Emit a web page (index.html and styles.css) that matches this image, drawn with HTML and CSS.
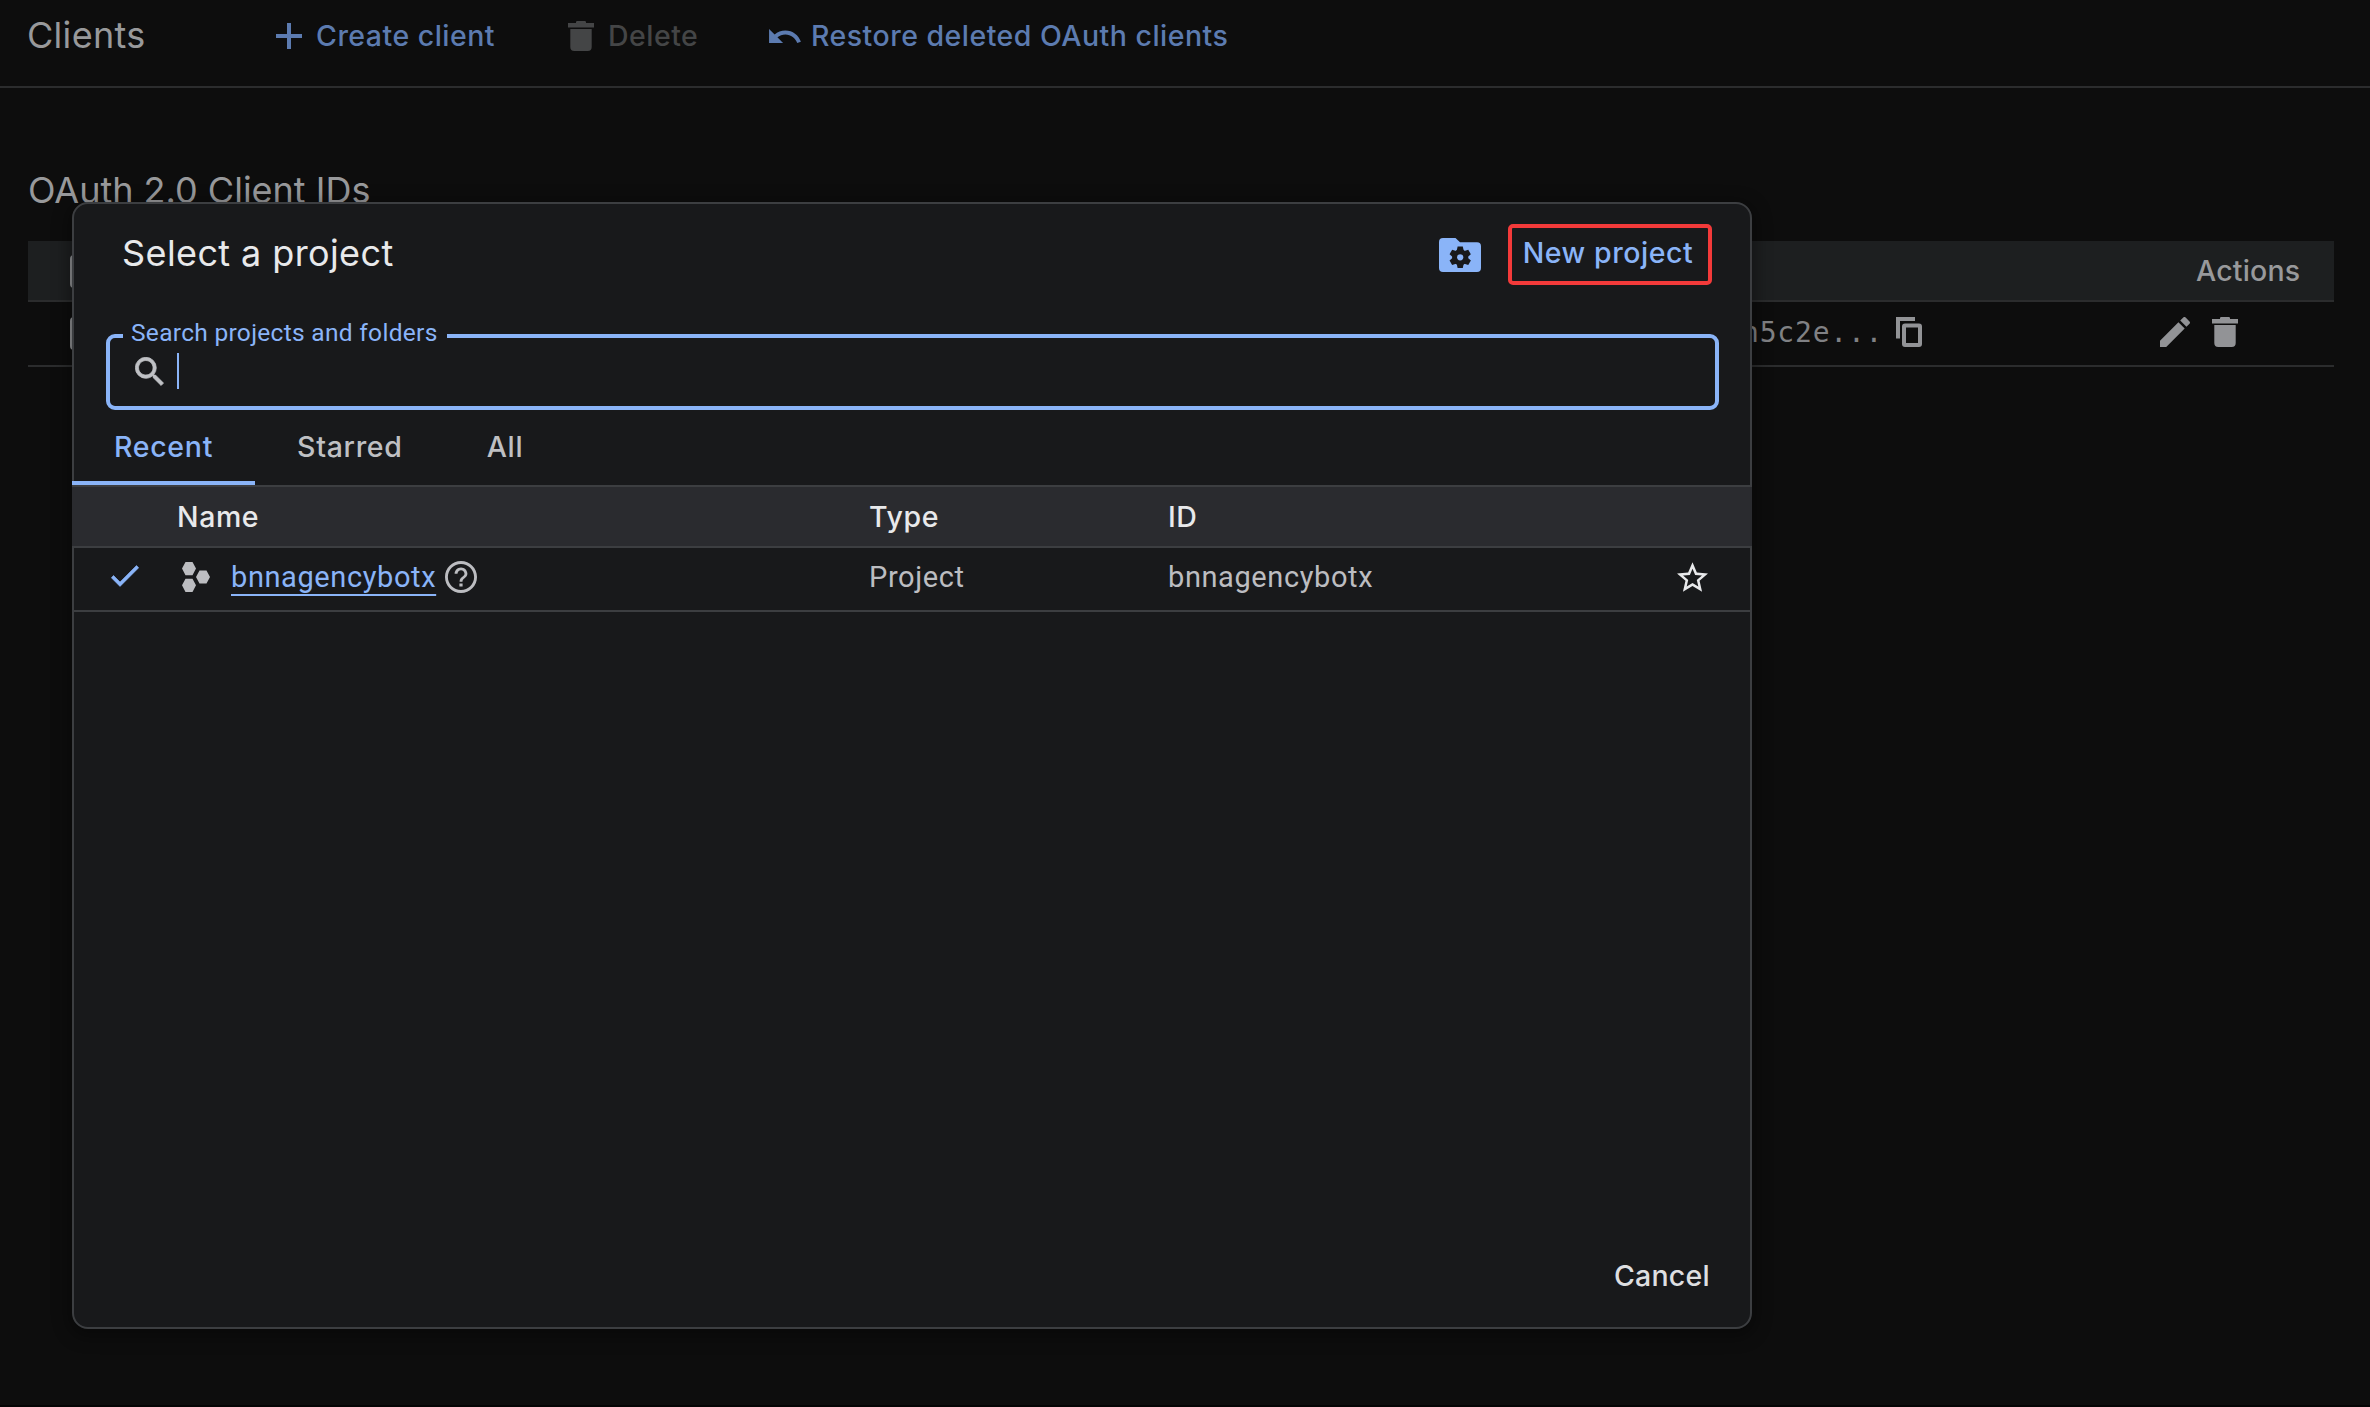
FILE: index.html
```html
<!DOCTYPE html>
<html lang="en">
<head>
<meta charset="utf-8">
<title>Clients</title>
<link rel="stylesheet" href="styles.css">
</head>
<body>
<svg class="defs" aria-hidden="true">
  <symbol id="trash" viewBox="0 0 26 30">
    <path d="M0 2H8V1.2Q8 0 9.2 0H16.8Q18 0 18 1.2V2H26V6.4H0ZM2.3 8H23.7V26Q23.7 30 19.7 30H6.3Q2.3 30 2.3 26Z"/>
  </symbol>
</svg>

<div class="page">
  <header class="toolbar">
    <h1 class="toolbar-title">Clients</h1>
    <button class="tool tool-create">
      <svg width="26" height="26" viewBox="0 0 26 26"><path d="M11 0h4v11h11v4H15v11h-4V15H0v-4h11z"/></svg>
      <span>Create client</span>
    </button>
    <button class="tool tool-delete">
      <svg width="26" height="30"><use href="#trash"/></svg>
      <span>Delete</span>
    </button>
    <button class="tool tool-restore">
      <svg width="32" height="14" viewBox="2 7 20.5 9"><path d="M12.5 8c-2.65 0-5.05.99-6.9 2.6L2 7v9h9l-3.62-3.62c1.39-1.16 3.16-1.88 5.12-1.88 3.54 0 6.55 2.31 7.6 5.5l2.37-.78C21.08 11.03 17.15 8 12.5 8z"/></svg>
      <span>Restore deleted OAuth clients</span>
    </button>
  </header>

  <main class="content">
    <h2 class="section-title">OAuth 2.0 Client IDs</h2>
    <div class="clients">
      <div class="clients-row clients-head">
        <span class="checkbox"></span>
        <span></span>
        <span class="actions-label">Actions</span>
      </div>
      <div class="clients-row clients-item">
        <span class="checkbox"></span>
        <span class="client-id">
          <code>n5c2e...</code>
          <svg width="26" height="30" viewBox="0 0 26 30" class="line"><path d="M19 2H2V21.5"/><rect x="8" y="8.5" width="16" height="19.5" rx="1"/></svg>
        </span>
        <span class="row-actions">
          <svg width="30" height="30" viewBox="3 3 18 18"><path d="M3 17.25V21h3.75L17.81 9.94l-3.75-3.75L3 17.25zM20.71 7.04c.39-.39.39-1.02 0-1.41l-2.34-2.34a1 1 0 0 0-1.41 0l-1.83 1.83 3.75 3.75 1.83-1.83z"/></svg>
          <svg width="26" height="30"><use href="#trash"/></svg>
        </span>
      </div>
    </div>
  </main>

  <section class="dialog" role="dialog" aria-label="Select a project">
    <div class="dialog-head">
      <h2 class="dialog-title">Select a project</h2>
      <svg class="manage" width="42" height="34" viewBox="0 0 42 34">
        <path d="M4 0H16.5L21 4.3H38Q42 4.3 42 8.3V30Q42 34 38 34H4Q0 34 0 30V4Q0 0 4 0Z"/>
        <g class="gear" transform="translate(21.2 19.3)">
          <circle r="8"/>
          <path id="tooth" d="M-2.6-10.8H2.6L3.6-6V6L2.6 10.8H-2.6L-3.6 6V-6Z"/>
          <use href="#tooth" transform="rotate(60)"/>
          <use href="#tooth" transform="rotate(120)"/>
        </g>
        <circle cx="21.2" cy="19.3" r="3.1"/>
      </svg>
      <button class="new-project">New project</button>
    </div>

    <fieldset class="search">
      <legend>Search projects and folders</legend>
      <div class="search-field">
        <svg class="search-icon" width="29" height="29" viewBox="2.8 2.8 18 18"><path d="M15.5 14h-.79l-.28-.27A6.47 6.47 0 0 0 16 9.5 6.5 6.5 0 1 0 9.5 16c1.61 0 3.09-.59 4.23-1.57l.27.28v.79l5 4.99L20.49 19l-4.99-5zm-6 0C7.01 14 5 11.99 5 9.5S7.01 5 9.5 5 14 7.01 14 9.5 11.99 14 9.5 14z"/></svg>
        <span class="caret"></span>
      </div>
    </fieldset>

    <nav class="tabs">
      <button class="tab active">Recent</button>
      <button class="tab">Starred</button>
      <button class="tab">All</button>
    </nav>

    <div class="projects">
      <div class="project-row project-head">
        <span></span><span>Name</span><span>Type</span><span>ID</span><span></span>
      </div>
      <div class="project-row project-item">
        <svg class="check" width="28" height="22" viewBox="3.2 5.4 18 13.8"><path d="M9 16.17 4.83 12l-1.42 1.41L9 19 21 7l-1.41-1.41z"/></svg>
        <span class="project-name">
          <svg width="28" height="30" viewBox="0 0 28 30"><path d="M0 6.6 3.5 0h7L14 6.6l-3.5 6.6h-7zM0 23.3l3.5-6.6h7l3.5 6.6-3.5 6.6h-7zM14 15l3.5-6.6h7L28 15l-3.5 6.6h-7z"/></svg>
          <a class="project-link">bnnagencybotx</a>
          <svg width="32" height="32" viewBox="2 2 20 20"><path d="M11 18h2v-2h-2v2zm1-16C6.48 2 2 6.48 2 12s4.48 10 10 10 10-4.48 10-10S17.52 2 12 2zm0 18.2c-4.5 0-8.2-3.7-8.2-8.2S7.5 3.8 12 3.8s8.2 3.7 8.2 8.2-3.7 8.2-8.2 8.2zM12 6c-2.21 0-4 1.79-4 4h1.8c0-1.2 1-2.2 2.2-2.2s2.2 1 2.2 2.2c0 2-3.1 1.75-3.1 5h1.8c0-2.25 3.1-2.5 3.1-5 0-2.21-1.79-4-4-4z"/></svg>
        </span>
        <span>Project</span>
        <span>bnnagencybotx</span>
        <svg class="star" width="31" height="30" viewBox="2 2 20 19"><path d="M22 9.24l-7.19-.62L12 2 9.19 8.63 2 9.24l5.46 4.73L5.82 21 12 17.27 18.18 21l-1.63-7.03L22 9.24zM12 15.4l-3.76 2.27 1-4.28-3.32-2.88 4.38-.38L12 6.1l1.71 4.04 4.38.38-3.32 2.88 1 4.28L12 15.4z"/></svg>
      </div>
    </div>

    <div class="dialog-footer">
      <button class="cancel">Cancel</button>
    </div>
  </section>
</div>
</body>
</html>
```
FILE: styles.css
```css
* { box-sizing: border-box; }

body {
  margin: 0;
  background: #0d0d0d;
  color: #98999b;
  font: 500 28.5px "Inter", sans-serif;
}

h1, h2 { margin: 0; font-size: 36px; font-weight: 400; }

button {
  padding: 0;
  border: 0;
  background: none;
  color: inherit;
  font: inherit;
  letter-spacing: inherit;
}

svg { display: block; flex: none; fill: currentColor; }
.defs { position: absolute; width: 0; height: 0; }
.line { fill: none; stroke: currentColor; stroke-width: 4; }

.page {
  position: relative;
  height: 1407px;
  overflow: hidden;
  border-bottom: 2px solid #040404;
}

/* Toolbar */
.toolbar {
  display: grid;
  grid-template-columns: 248px 292px 201px auto;
  align-items: center;
  height: 88px;
  padding: 0 0 15px 28px;
  border-bottom: 2px solid #2b2c2d;
}
.toolbar-title { margin: -2px 0 0 -1px; letter-spacing: .3px; }
.tool {
  display: flex;
  align-items: center;
  letter-spacing: .48px;
  white-space: nowrap;
}
.tool-create { gap: 14px; color: #5c7bb0; }
.tool-delete { gap: 14px; color: #444546; }
.tool-restore { gap: 10px; color: #5c7bb0; }

/* OAuth clients */
.content { padding: 80px 36px 0 28px; }
.section-title { height: 73px; line-height: 44px; }
.clients-row {
  display: grid;
  grid-template-columns: 1714px 418px 1fr;
  align-items: center;
  border-bottom: 2px solid #2b2c2d;
}
.clients-head { height: 61px; background: #1d1f20; letter-spacing: .2px; }
.clients-item { height: 65px; padding-bottom: 3px; color: #929396; }
.checkbox {
  width: 33px;
  height: 33px;
  margin: 2px 0 0 42px;
  border: 3px solid #929396;
  border-radius: 4px;
}
.actions-label { margin-left: 36px; }
.client-id { display: flex; align-items: center; gap: 13px; }
.client-id code {
  color: #808184;
  font: 400 28px "DejaVu Sans Mono", monospace;
  letter-spacing: .8px;
}
.row-actions { display: flex; gap: 22px; }

/* Project picker */
.dialog {
  position: absolute;
  top: 202px;
  left: 72px;
  display: flex;
  flex-direction: column;
  width: 1680px;
  height: 1127px;
  border: 2px solid #3c3e41;
  border-radius: 16px;
  background: #18191b;
  box-shadow: 0 4px 16px 4px rgba(0, 0, 0, .35);
  color: #e8e9eb;
}
.dialog-head {
  display: flex;
  align-items: center;
  height: 99px;
  padding: 0 38px 0 48px;
}
.dialog-title { flex: 1; margin-top: -2px; letter-spacing: .4px; }
.manage { margin: 2px 27px 0 0; color: #8ab4f8; }
.gear { fill: #18191b; }
.new-project {
  width: 204px;
  height: 61px;
  margin-top: 1px;
  padding: 0 4px 3px 0;
  border: 4px solid #f33a3a;
  border-radius: 5px;
  color: #8ab4f8;
  letter-spacing: .57px;
}

.search {
  height: 91px;
  margin: 16px 31px 0 32px;
  padding: 0 0 0 13px;
  border: 4px solid #8ab4f8;
  border-radius: 9px;
}
.search legend {
  width: 324px;
  padding: 0 0 6px 8px;
  color: #8ab4f8;
  font: 400 24.5px/28px "Roboto", sans-serif;
  letter-spacing: .3px;
  white-space: nowrap;
}
.search-field {
  display: flex;
  align-items: center;
  gap: 13px;
  height: 36px;
  padding-left: 12px;
  color: #bfc1c5;
}
.search-icon { stroke: currentColor; stroke-width: .5; }
.caret { width: 2px; height: 36px; background: #8ab4f8; }

.tabs { display: flex; height: 73px; margin: 2px -2px 0; }
.tab {
  padding: 0 42px;
  border-bottom: 4px solid transparent;
  color: #bfc0c3;
  letter-spacing: .7px;
}
.tab.active { border-color: #8ab4f8; color: #8ab4f8; }

.projects { margin: 0 -2px; border-top: 2px solid #3c3e41; }
.project-row {
  display: grid;
  grid-template-columns: 105px 692px 299px 1fr 75px;
  align-items: center;
  border-bottom: 2px solid #3c3e41;
}
.project-head { height: 61px; background: #2a2b2f; letter-spacing: .6px; }
.project-item {
  height: 64px;
  padding-bottom: 4px;
  color: #bcbdc1;
  font-family: "Roboto", sans-serif;
  font-size: 29px;
  font-weight: 400;
  letter-spacing: .6px;
}
.check {
  margin: -2px 0 0 39px;
  color: #8ab4f8;
  stroke: currentColor;
  stroke-width: .4;
}
.project-name { display: flex; align-items: center; padding-left: 5px; }
.project-link {
  margin: 0 9px 0 21px;
  color: #8ab4f8;
  text-decoration: underline 2px;
  text-decoration-skip-ink: none;
  text-underline-offset: 7px;
}
.star { color: #e8e9eb; }

.dialog-footer {
  display: flex;
  justify-content: flex-end;
  margin-top: auto;
  padding: 0 40px 31px 0;
}
.cancel { color: #dedfe1; line-height: 40px; letter-spacing: .25px; }
```
